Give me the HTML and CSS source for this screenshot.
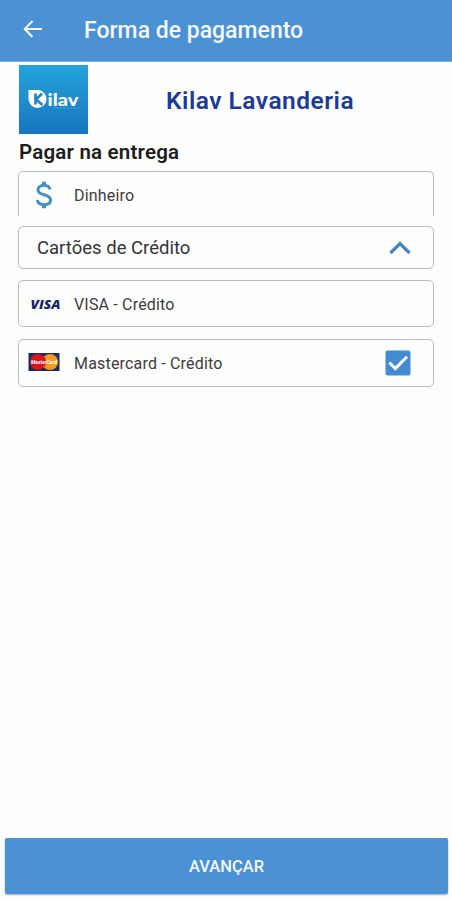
FILE: index.html
```html
<!DOCTYPE html>
<html lang="pt-BR">
<head>
<meta charset="utf-8">
<title>Forma de pagamento</title>
<link rel="stylesheet" href="styles.css">
</head>
<body>
<header class="bar">
  <svg class="back" width="20" height="20" viewBox="0 0 20 20"><path d="M19 10H2M9.500 2L1.700 10l7.800 8"/></svg>
  <h1 class="bar-title"><span>Forma de pagamento</span></h1>
</header>
<main class="content">
  <section class="store">
    <svg class="logo" width="69" height="69" viewBox="0 0 69 69">
      <defs><linearGradient id="sky" x1="0" y1="0" x2="0" y2="1"><stop offset="0" stop-color="#24a4dc"/><stop offset="1" stop-color="#1875bd"/></linearGradient></defs>
      <rect width="69" height="69" fill="url(#sky)"/>
      <path d="M9.500 25H19a9 9 0 1 1-9.500 9z" fill="#fff"/>
      <path d="M16.500 28.500v11M23 28.500l-6 6 6.500 5.500" fill="none" stroke="#1a86c6" stroke-width="2.600"/>
      <text class="logo-name" x="28.500" y="40.500" textLength="31" lengthAdjust="spacingAndGlyphs">ilav</text>
      <path d="M34 43h26" stroke="#79b9df" stroke-width="1" stroke-dasharray="2 1.500" opacity=".6"/>
    </svg>
    <h2 class="store-name"><span>Kilav Lavanderia</span></h2>
  </section>
  <h3 class="section-title"><span>Pagar na entrega</span></h3>
  <div class="option cash">
    <svg class="method" width="32" height="30" viewBox="0 0 32 30"><path class="dollar" d="M22 9.500C21.500 6.800 19.400 5.400 16 5.400c-3.700 0-6 1.700-6 4.500 0 6.300 12.600 3.400 12.600 10 0 2.900-2.500 4.700-6.300 4.700-4 0-6.500-1.700-7-4.700"/><path class="dollar-bar" d="M16 1.700v4M16 24v4.300"/></svg>
    <span class="label">Dinheiro</span>
  </div>
  <div class="option group">
    <span class="group-label">Cartões de Crédito</span>
    <svg class="chevron" width="22" height="14" viewBox="0 0 22 14"><path d="M1.500 12L11 2.500l9.500 9.500"/></svg>
  </div>
  <div class="option visa">
    <svg class="method" width="32" height="20" viewBox="0 0 32 20"><text class="visa-mark" x="2.500" y="14.500" textLength="30" lengthAdjust="spacingAndGlyphs">VISA</text></svg>
    <span class="label">VISA - Crédito</span>
  </div>
  <div class="option master">
    <svg class="method" width="32" height="20" viewBox="0 0 32 20"><rect x=".5" y="0" width="31" height="18" fill="#1d2a5c"/><circle cx="22" cy="9" r="8" fill="#f49a23"/><circle cx="10" cy="9" r="8" fill="#d7141f"/><path d="M15.500 4.500h2M15 13.500h3" stroke="#e5661f"/><text class="mc-mark" x="3" y="11" textLength="26" lengthAdjust="spacingAndGlyphs">MasterCard</text></svg>
    <span class="label">Mastercard - Crédito</span>
    <svg class="check" width="26" height="26" viewBox="0 0 26 26"><rect x=".5" y=".5" width="25" height="25" rx="2" fill="#428bd0"/><path d="M4.300 12.500l6 6L22 6.700"/></svg>
  </div>
</main>
<button class="next" type="button"><span>AVANÇAR</span></button>
</body>
</html>
```
FILE: styles.css
```css
* { box-sizing: border-box; }
body {
  margin: 0;
  height: 900px;
  display: flex;
  flex-direction: column;
  background: #fefefe;
  font-family: Roboto, "Liberation Sans", sans-serif;
  color: #222;
}
h1, h2, h3 { margin: 0; white-space: nowrap; }
.bar {
  height: 62px;
  flex: none;
  display: flex;
  align-items: center;
  padding-left: 23px;
  background: #4b91d3;
  border-bottom: 1px solid #7faed5;
}
.back { margin-bottom: 3px; }
.back path { fill: none; stroke: #f4fafd; stroke-width: 2; }
.bar-title {
  margin-left: 41px;
  font-size: 23px;
  font-weight: 500;
  color: #f3f9fd;
}
.content {
  flex: 1;
  padding: 3px 18px 0 18px;
  display: flex;
  flex-direction: column;
}
.store { display: flex; align-items: center; height: 69px; }
.logo { margin-left: 1px; flex: none; }
.logo-name { font: 900 17px Lato, sans-serif; fill: #fff; }
.store-name {
  flex: 1;
  padding: 2px 0 0 78px;
  font-size: 24.500px;
  font-weight: 600;
  letter-spacing: .5px;
  color: #1b3b97;
}
.section-title {
  height: 37px;
  line-height: 37px;
  padding-left: 1px;
  font-size: 20.500px;
  font-weight: 600;
  letter-spacing: .2px;
  color: #1c1c1c;
}
.option {
  display: flex;
  align-items: center;
  border: 1.500px solid #bdbdbd;
  border-radius: 5px;
  padding-left: 9px;
}
.method { flex: none; margin-right: 14px; }
.label { font-size: 16px; letter-spacing: .18px; color: #3c3c3c; white-space: nowrap; }
.cash {
  height: 45px;
  border-bottom: 0;
  border-radius: 5px 5px 0 0;
  padding-top: 2px;
}
.dollar, .dollar-bar { fill: none; stroke: #428fc9; stroke-width: 2.900; }
.dollar-bar { stroke-width: 4; }
.group { height: 43px; margin-top: 10px; padding-left: 18px; }
.group-label { font-size: 18.500px; color: #333; padding-top: 1px; }
.chevron { margin-left: auto; margin-right: 22px; }
.chevron path { fill: none; stroke: #4585c3; stroke-width: 3.200; }
.visa { height: 47px; margin-top: 11px; padding-top: 1px; }
.visa-mark { font: italic 800 13px "Open Sans", sans-serif; fill: #192664; }
.master { height: 48px; margin-top: 12px; }
.mc-mark { font: italic 700 5.500px Roboto, sans-serif; fill: #fff; }
.check { margin-left: auto; margin-right: 22px; }
.check path { fill: none; stroke: #fff; stroke-width: 3; }
.next {
  flex: none;
  height: 56px;
  margin: 0 4px 6px 5px;
  padding: 1px 0 0;
  border: 0;
  border-radius: 2px;
  background: #4b91d3;
  box-shadow: 0 1px 2px #9caebc;
  font: 500 16.500px Roboto, sans-serif;
  color: #f3f9fd;
}
```
